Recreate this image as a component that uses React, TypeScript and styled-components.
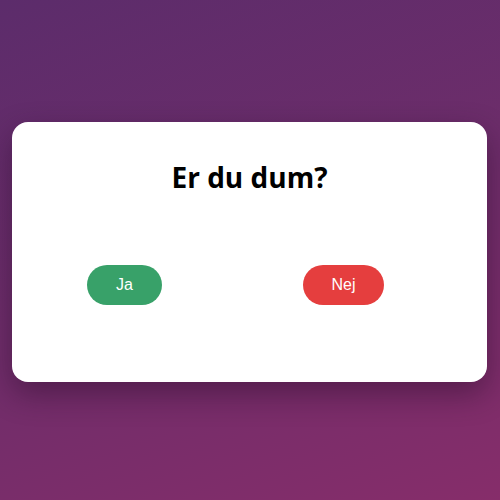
import React from "react";
import styled, { createGlobalStyle } from "styled-components";

const GlobalStyle = createGlobalStyle`
  html, body {
    margin: 0;
    padding: 0;
  }
  body {
    font-family: "Liberation Sans", Arial, sans-serif;
  }
`;

const Page = styled.div`
  min-height: 100vh;
  padding: 4px 1px 0 0;
  box-sizing: border-box;
  display: flex;
  align-items: center;
  justify-content: center;
  background: linear-gradient(160deg, #5c2c6b 0%, #6e2d6a 50%, #862d6a 100%);
`;

const Card = styled.div`
  width: 475px;
  height: 260px;
  box-sizing: border-box;
  background-color: #ffffff;
  border-radius: 16px;
  box-shadow: 0 12px 30px rgba(40, 10, 40, 0.45);
  display: flex;
  flex-direction: column;
  align-items: center;
  padding-top: 38px;
`;

const Title = styled.h1`
  margin: 0;
  font-family: "Open Sans", "Noto Sans", sans-serif;
  font-weight: 700;
  font-size: 28px;
  line-height: 34px;
  color: #000000;
`;

const ButtonRow = styled.div`
  align-self: stretch;
  display: flex;
  align-items: center;
  padding-left: 75px;
  gap: 141px;
  margin-top: 71px;
`;

const ChoiceButton = styled.button<{ $color: string; $width: number }>`
  width: ${(p) => p.$width}px;
  height: 40px;
  border: none;
  border-radius: 20px;
  background-color: ${(p) => p.$color};
  color: #ffffff;
  font-family: "Liberation Sans", Arial, sans-serif;
  font-size: 16px;
  cursor: pointer;
  padding: 0;
`;

export default function App() {
  return (
    <>
      <GlobalStyle />
      <Page>
        <Card>
          <Title>Er du dum?</Title>
          <ButtonRow>
            <ChoiceButton $color="#38a169" $width={75}>
              Ja
            </ChoiceButton>
            <ChoiceButton $color="#e53e3e" $width={81}>
              Nej
            </ChoiceButton>
          </ButtonRow>
        </Card>
      </Page>
    </>
  );
}
